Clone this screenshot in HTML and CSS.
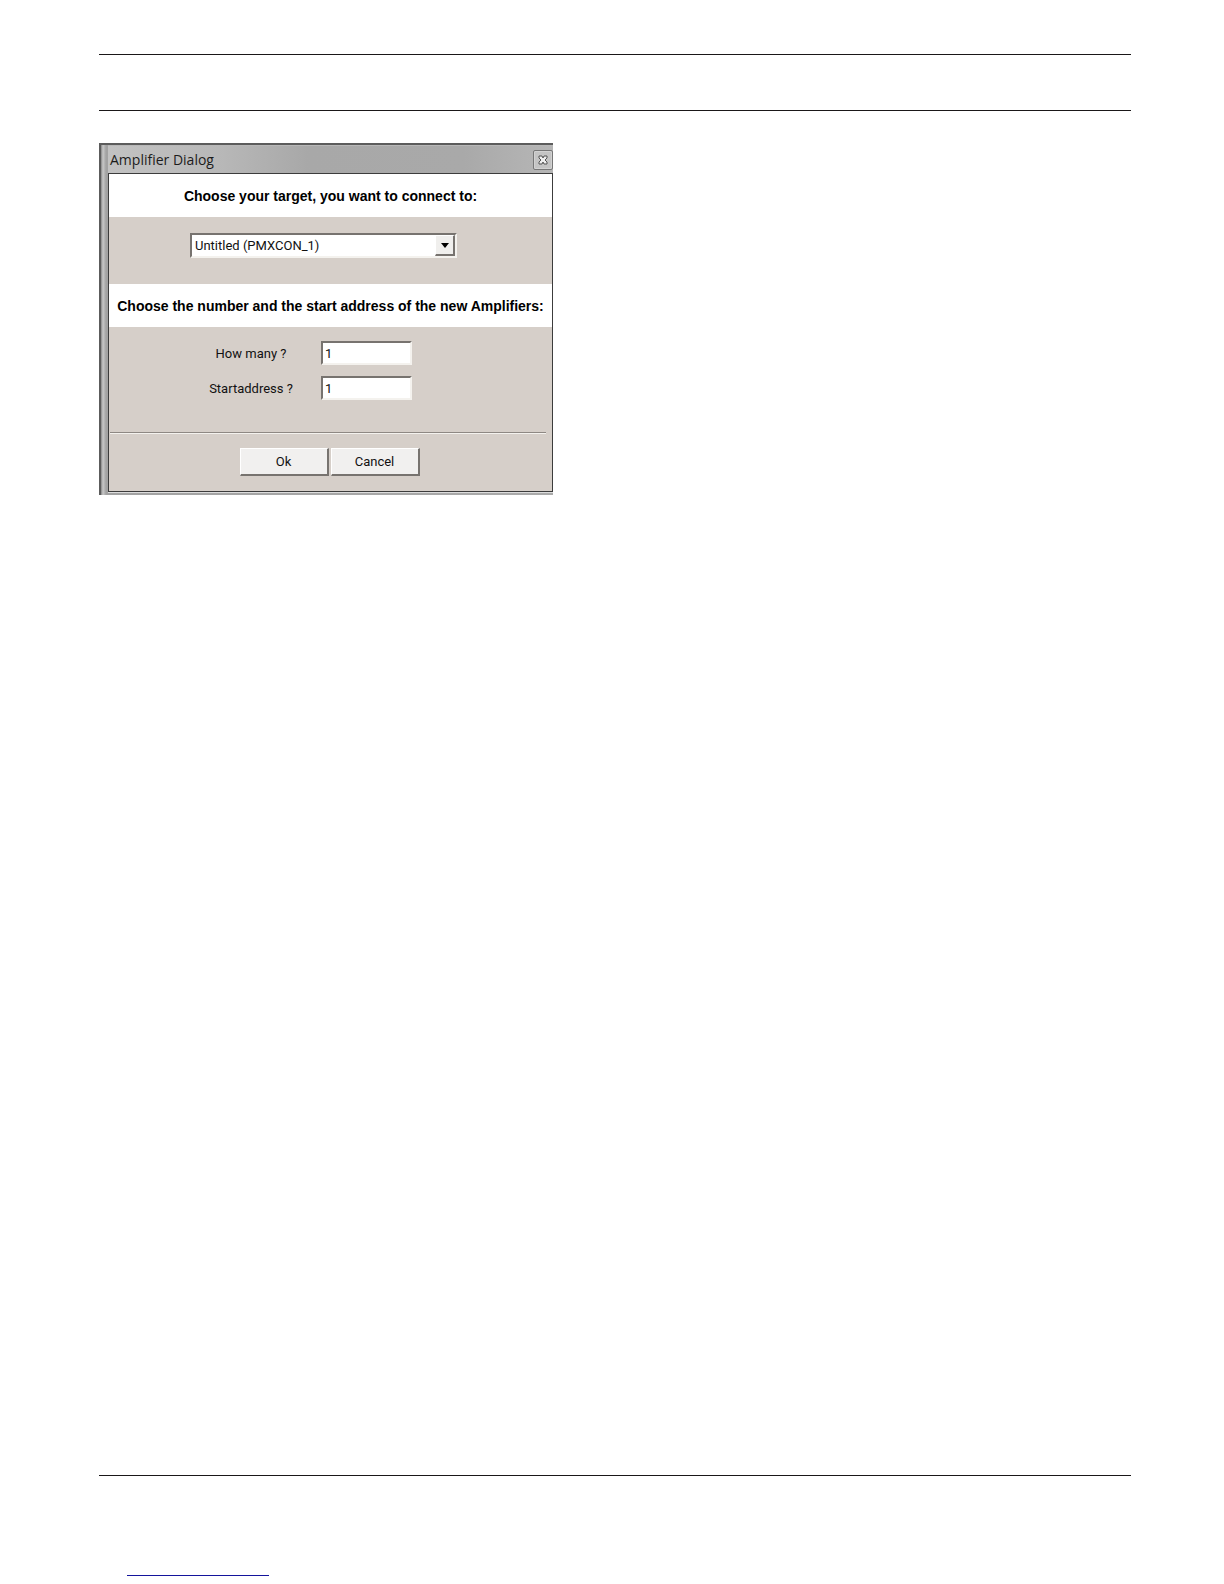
FILE: index.html
```html
<!DOCTYPE html>
<html lang="en">
<head>
  <meta charset="UTF-8" />
  <meta name="viewport" content="width=device-width, initial-scale=1.0" />
  <title>Amplifier Dialog</title>
  <link rel="stylesheet" href="styles.css">
</head>
<body>
  <header class="page-header"></header>

  <main class="content">
    <form class="dialog">
      <div class="title-bar">
        <span>Amplifier Dialog</span>
        <button class="close" type="button" aria-label="Close">
          <svg width="10" height="10" viewBox="0 0 10 10">
            <path d="M1 1h3l1 2 1-2h3v2L7 5l2 2v2H6L5 7 4 9H1V7l2-2-2-2z" fill="#eee" stroke="#555" />
          </svg>
        </button>
      </div>

      <div class="panel">
        <label class="heading" for="target">Choose your target, you want to connect to:</label>
        <div class="target-row">
          <div class="combo">
            <select id="target">
              <option>Untitled (PMXCON_1)</option>
            </select>
            <span class="arrow">
              <svg width="8" height="5" viewBox="0 0 8 5"><path d="M0 0h8L4 5z" fill="#000" /></svg>
            </span>
          </div>
        </div>

        <div class="heading">Choose the number and the start address of the new Amplifiers:</div>
        <div class="fields">
          <label for="count">How many ?</label>
          <input id="count" type="text" value="1" />
          <label for="start">Startaddress ?</label>
          <input id="start" type="text" value="1" />
        </div>

        <div class="buttons">
          <button type="button">Ok</button>
          <button type="button">Cancel</button>
        </div>
      </div>
    </form>
  </main>

  <footer class="page-footer">
    <div class="link-line"></div>
  </footer>
</body>
</html>
```
FILE: styles.css
```css
* {
  box-sizing: border-box;
}
body {
  margin: 0;
  padding: 54px 93px 0 99px;
  min-height: 100vh;
  display: flex;
  flex-direction: column;
  background: #fff;
  color: #111;
  font-family: Roboto, "Liberation Sans", sans-serif;
  font-size: 13px;
}
.page-header {
  height: 57px;
  border-top: 1px solid #1a1718;
  border-bottom: 1px solid #1a1718;
}
.content {
  flex: 1;
  padding-top: 32px;
}

/* dialog window */
.dialog {
  width: 100%;
  max-width: 454px;
  padding-left: 7px;
  padding-bottom: 3px;
  background: linear-gradient(to right, #888 0, #c8c8c8 2px, #a2a2a2 5px, #aaa 100%);
  border-top: 2px solid #5c5c5c;
  border-left: 2px solid #5c5c5c;
}
.title-bar {
  display: flex;
  align-items: center;
  justify-content: space-between;
  height: 28px;
  padding-left: 2px;
  background: linear-gradient(to right, #c2c2c2, #b8b8b8 25%, #a8a8a8 45%, #a9a9a9 80%, #b6b6b6);
  border-top: 1px solid #b8b8b8;
  color: #1c1c1c;
  font-family: "Open Sans", "Noto Sans", sans-serif;
  font-size: 14px;
}
.close {
  display: flex;
  align-items: center;
  justify-content: center;
  width: 20px;
  height: 20px;
  padding: 0;
  background: #c4c4c4;
  border: 1px solid #777;
  border-radius: 2px;
  box-shadow: inset 0 0 0 1px #d2d2d2;
}
.panel {
  background: #d6cfc9;
  border: 1px solid #3c3c3c;
  box-shadow: 0 1px 0 #ddd;
}
.heading {
  display: flex;
  align-items: center;
  justify-content: center;
  height: 43px;
  background: #fff;
  color: #000;
  font-family: "Liberation Sans", Arial, sans-serif;
  font-size: 14px;
  font-weight: bold;
  white-space: nowrap;
}
.target-row {
  display: flex;
  justify-content: center;
  height: 67px;
  padding-top: 16px;
  padding-right: 14px;
}
.combo {
  position: relative;
  width: 267px;
  height: 25px;
}
.combo select {
  appearance: none;
  width: 100%;
  height: 100%;
  padding: 0 24px 0 3px;
  background: #fff;
  border: 2px solid;
  border-color: #77736f #f4f2ee #f4f2ee #77736f;
  border-radius: 0;
  color: #111;
  font: inherit;
}
.arrow {
  position: absolute;
  top: 2px;
  right: 2px;
  bottom: 2px;
  display: flex;
  align-items: center;
  justify-content: center;
  width: 20px;
  background: #f0efed;
  border: 1px solid #fff;
  border-right: 2px solid #77736f;
  border-bottom: 2px solid #77736f;
  pointer-events: none;
}
.fields {
  display: grid;
  grid-template-columns: 88px 91px;
  column-gap: 26px;
  row-gap: 11px;
  align-items: center;
  margin: 0 6px 0 1px;
  padding: 14px 0 32px 97px;
  border-bottom: 1px solid #8e8883;
  box-shadow: 0 1px 0 #f4f2ee;
}
.fields label {
  text-align: center;
  white-space: nowrap;
}
.fields input {
  width: 100%;
  height: 24px;
  padding: 0 2px;
  background: #fff;
  border: 2px solid;
  border-color: #77736f #f4f2ee #f4f2ee #77736f;
  color: #111;
  font: inherit;
}
.buttons {
  display: flex;
  justify-content: center;
  gap: 2px;
  padding: 15px 2px 15px 0;
}
.buttons button {
  width: 89px;
  height: 28px;
  padding: 0;
  background: #f1f0ef;
  border: 1px solid #fff;
  border-right: 2px solid #77736f;
  border-bottom: 2px solid #77736f;
  color: #111;
  font: inherit;
}

.page-footer {
  height: 109px;
  padding: 99px 28px 0;
  border-top: 1px solid #1a1718;
}
.link-line {
  width: 142px;
  border-top: 1px solid #14149c;
}
```
